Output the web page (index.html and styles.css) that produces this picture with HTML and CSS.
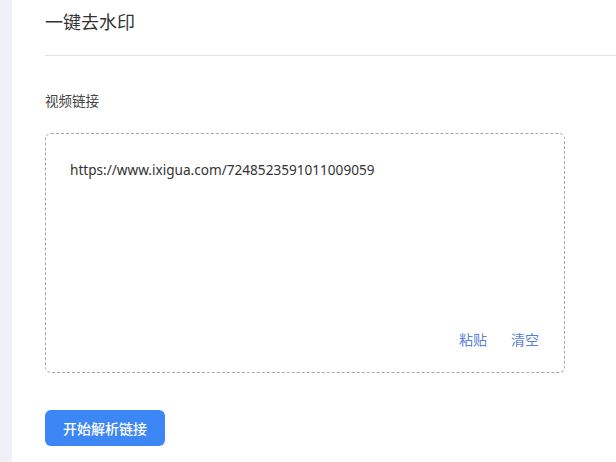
FILE: index.html
```html
<!DOCTYPE html>
<html lang="zh-CN">
<head>
  <meta charset="UTF-8" />
  <meta name="viewport" content="width=device-width, initial-scale=1.0"/>
  <title>一键去水印</title>
  <link rel="stylesheet" href="styles.css">
</head>
<body>

  <div class="side"></div>

  <div class="main">
    <div class="header">
      <h2>一键去水印</h2>
    </div>

    <div class="section">
      <div class="label">视频链接</div>

      <div class="link-box">
        <div class="link-text">https://www.ixigua.com/7248523591011009059</div>
        <div class="link-actions">
          <span class="action">粘贴</span>
          <span class="action">清空</span>
        </div>
      </div>

      <button type="button" class="parse-btn">开始解析链接</button>
    </div>
  </div>

</body>
</html>
```

FILE: styles.css
```css
html, body {
  height: 100%;
}

body {
  margin: 0;
  display: flex;
  background: #ffffff;
  font-family: "Noto Sans", "Noto Sans CJK SC", sans-serif;
  color: #333333;
}

.side {
  width: 12px;
  flex-shrink: 0;
  background: #f0f0f7;
}

.main {
  flex: 1;
  background: white;
}

.header {
  margin-left: 33px;
  height: 56px;
  box-sizing: border-box;
  padding-top: 8px;
  border-bottom: 1px solid #e3e3e3;
}

h2 {
  margin: 0;
  font-size: 18px;
  line-height: 28px;
  font-weight: 400;
  color: #333333;
}

.section {
  padding: 35px 0 0 33px;
}

.label {
  font-size: 13.5px;
  line-height: 20px;
  color: #444444;
}

.link-box {
  margin-top: 22px;
  width: 520px;
  height: 240px;
  box-sizing: border-box;
  border: 1px dashed #a8a8a8;
  border-radius: 6px;
  padding: 26px 25px 22px 24px;
  display: flex;
  flex-direction: column;
}

.link-text {
  flex: 1;
  font-size: 13.6px;
  line-height: 20px;
  color: #333333;
}

.link-actions {
  display: flex;
  justify-content: flex-end;
  gap: 24px;
}

.action {
  font-size: 14px;
  line-height: 20px;
  color: #5b7fd9;
  cursor: pointer;
}

.parse-btn {
  margin-top: 37px;
  width: 120px;
  height: 36px;
  border: none;
  border-radius: 6px;
  background-color: #3c86f6;
  color: white;
  font-family: inherit;
  font-size: 14px;
  font-weight: 500;
  cursor: pointer;
}
```
